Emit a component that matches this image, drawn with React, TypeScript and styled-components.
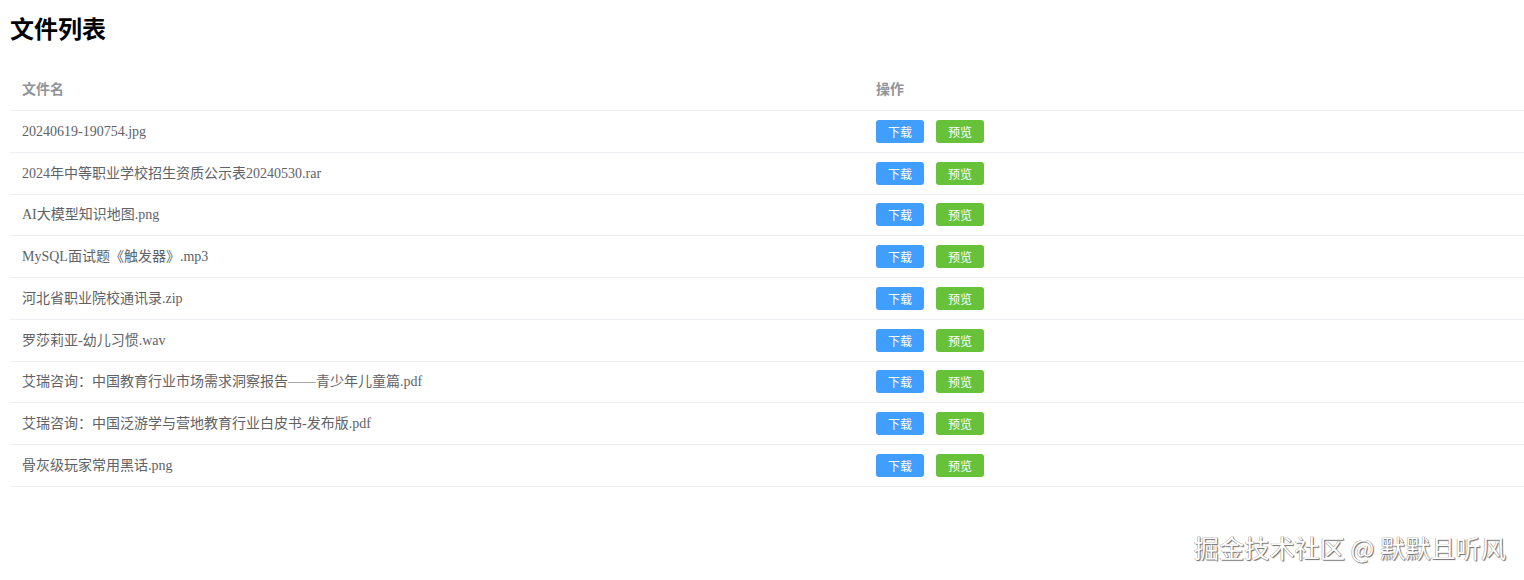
import React from "react";
import styled, { createGlobalStyle } from "styled-components";

const Global = createGlobalStyle`
  html, body { margin: 0; padding: 0; background: #fff; }
  body { font-family: "Liberation Serif", "Noto Sans CJK SC", serif; }
`;

const Page = styled.div`
  position: relative;
  width: 1524px;
  height: 580px;
  padding-left: 10px;
  box-sizing: border-box;
  overflow: hidden;
`;

const Title = styled.h2`
  margin: 0;
  padding-top: 13px;
  height: 68px;
  box-sizing: border-box;
  font-family: "Liberation Sans", "Noto Sans CJK SC", sans-serif;
  font-size: 24px;
  font-weight: 700;
  line-height: 34px;
  color: #000;
`;

const Table = styled.div`
  width: 1514px;
  display: flex;
  flex-direction: column;
`;

const Row = styled.div<{ $head?: boolean }>`
  display: grid;
  grid-template-columns: 854px 1fr;
  height: ${(p) => (p.$head ? "43px" : "41.78px")};
  box-sizing: border-box;
  border-bottom: 1px solid #ebeef5;
  align-items: center;
`;

const HeadCell = styled.div`
  padding-left: 12px;
  padding-top: 1px;
  font-family: "Liberation Sans", "Noto Sans CJK SC", sans-serif;
  font-size: 14px;
  font-weight: 700;
  color: #909399;
  line-height: 23px;
`;

const Cell = styled.div`
  padding-left: 12px;
  font-family: "Liberation Serif", "Noto Sans CJK SC", serif;
  font-size: 14px;
  color: #606266;
  line-height: 23px;
  display: flex;
  align-items: center;
  gap: 12px;
`;

const Btn = styled.button<{ $kind: "primary" | "success" }>`
  width: 48px;
  height: 23px;
  padding: 0;
  border: none;
  border-radius: 3px;
  background: ${(p) => (p.$kind === "primary" ? "#409eff" : "#67c23a")};
  color: #fff;
  font-family: "Noto Sans CJK SC", sans-serif;
  font-size: 12px;
  line-height: 23px;
  cursor: pointer;
`;

const Watermark = styled.div`
  position: absolute;
  right: 18px;
  top: 531px;
  font-family: "Noto Sans CJK SC", sans-serif;
  font-size: 25.2px;
  line-height: 32px;
  color: #fff;
  text-shadow: 1px 1px 1px #6d6d6d, -0.5px -0.5px 0.5px #9a9a9a, 0.5px 0 0.5px #8a8a8a;
`;

const files = [
  "20240619-190754.jpg",
  "2024年中等职业学校招生资质公示表20240530.rar",
  "AI大模型知识地图.png",
  "MySQL面试题《触发器》.mp3",
  "河北省职业院校通讯录.zip",
  "罗莎莉亚-幼儿习惯.wav",
  "艾瑞咨询：中国教育行业市场需求洞察报告——青少年儿童篇.pdf",
  "艾瑞咨询：中国泛游学与营地教育行业白皮书-发布版.pdf",
  "骨灰级玩家常用黑话.png",
];

export default function App() {
  return (
    <Page>
      <Global />
      <Title>文件列表</Title>
      <Table>
        <Row $head>
          <HeadCell>文件名</HeadCell>
          <HeadCell>操作</HeadCell>
        </Row>
        {files.map((f) => (
          <Row key={f}>
            <Cell>{f}</Cell>
            <Cell>
              <Btn $kind="primary">下载</Btn>
              <Btn $kind="success">预览</Btn>
            </Cell>
          </Row>
        ))}
      </Table>
      <Watermark>掘金技术社区 @ 默默且听风</Watermark>
    </Page>
  );
}
